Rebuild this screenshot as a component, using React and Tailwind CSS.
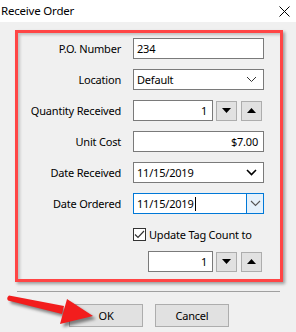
import React from "react";

function Chevron({ color = "#000", strokeWidth = 1.6 }) {
  return (
    <svg width="11" height="7" viewBox="0 0 11 7">
      <path d="M1 1 L5.5 5.5 L10 1" fill="none" stroke={color} strokeWidth={strokeWidth} />
    </svg>
  );
}

function SpinButton({ up }) {
  return (
    <div className="w-[21px] h-[20px] bg-[#e1e1e1] border border-[#adadad] flex items-center justify-center">
      <svg width="9" height="5" viewBox="0 0 9 5">
        {up ? <path d="M0 5 L4.5 0 L9 5 Z" fill="#000" /> : <path d="M0 0 L9 0 L4.5 5 Z" fill="#000" />}
      </svg>
    </div>
  );
}

function Row({ label, children }) {
  return (
    <div className="flex items-center h-[21px]">
      <div className="w-[103px] text-right">{label}</div>
      <div className="ml-[12px] flex items-center">{children}</div>
    </div>
  );
}

function TextBox({ value, right, width = "w-[131px]" }) {
  return (
    <div
      className={`${width} h-[21px] bg-white border border-[#7a7a7a] flex items-center px-[3px] ${
        right ? "justify-end pr-[5px]" : ""
      }`}
    >
      {value}
    </div>
  );
}

export default function App() {
  return (
    <div
      className="relative w-[296px] h-[332px] bg-[#f0f0f0] overflow-hidden text-[11px] tracking-[-0.2px] text-black leading-none"
      style={{ fontFamily: '"Noto Sans", "Open Sans", sans-serif' }}
    >
      {/* title bar */}
      <div className="h-[22px] bg-white flex items-center justify-between pl-[1px] pr-[6px]">
        <span className="text-[11.5px]">Receive Order</span>
        <svg width="11" height="11" viewBox="0 0 11 11">
          <path d="M0.5 0.5 L10.5 10.5 M10.5 0.5 L0.5 10.5" stroke="#000" strokeWidth="1" />
        </svg>
      </div>

      {/* highlighted form */}
      <div className="ml-[15px] mt-[8px] w-[268px] h-[252px] border-[3px] border-[#ff4545] shadow-[2px_2px_3px_rgba(0,0,0,0.35),inset_2px_2px_3px_rgba(0,0,0,0.2)] pt-[5px] flex flex-col gap-[10px]">
        <Row label="P.O. Number">
          <TextBox value="234" />
        </Row>
        <Row label="Location">
          <div className="w-[131px] h-[21px] bg-white border border-[#7a7a7a] flex items-center justify-between pl-[3px] pr-[6px]">
            <span>Default</span>
            <Chevron color="#333" strokeWidth={1} />
          </div>
        </Row>
        <Row label="Quantity Received">
          <TextBox value="1" right width="w-[80px]" />
          <div className="ml-[3px] flex gap-[4px]">
            <SpinButton />
            <SpinButton up />
          </div>
        </Row>
        <Row label="Unit Cost">
          <TextBox value="$7.00" right />
        </Row>
        <Row label="Date Received">
          <div className="w-[131px] h-[21px] bg-white border border-[#7a7a7a] flex items-center justify-between pl-[3px] pr-[6px]">
            <span>11/15/2019</span>
            <Chevron />
          </div>
        </Row>
        <Row label="Date Ordered">
          <div className="w-[131px] h-[21px] bg-white border border-[#0078d7] flex items-stretch">
            <div className="flex-1 flex items-center pl-[3px]">
              <span>11/15/2019</span>
              <span className="w-[1px] h-[14px] bg-black ml-[1px]" />
            </div>
            <div className="w-[17px] bg-[#e5f1fb] border-l border-[#0078d7] flex items-center justify-center">
              <Chevron color="#555" strokeWidth={1.1} />
            </div>
          </div>
        </Row>
        <div className="flex items-center mt-[4px] ml-[115px] h-[13px]">
          <div className="w-[13px] h-[13px] border border-[#333] bg-white flex items-center justify-center">
            <svg width="11" height="9" viewBox="0 0 11 9">
              <path d="M1 4.5 L4 7.5 L10 1" fill="none" stroke="#333" strokeWidth="1.2" />
            </svg>
          </div>
          <span className="ml-[3px]">Update Tag Count to</span>
        </div>
        <div className="flex items-center ml-[130px]">
          <TextBox value="1" right width="w-[65px]" />
          <div className="ml-[3px] flex gap-[4px]">
            <SpinButton />
            <SpinButton up />
          </div>
        </div>
      </div>

      {/* separator */}
      <div className="ml-[17px] mt-[9px] w-[263px] h-[1px] bg-[#a0a0a0]" />

      {/* buttons */}
      <div className="flex gap-[12px] ml-[69px] mt-[12px]">
        <div className="w-[74px] h-[23px] bg-[#e1e1e1] border border-[#adadad] flex items-center justify-center">OK</div>
        <div className="w-[74px] h-[23px] bg-[#e1e1e1] border border-[#adadad] flex items-center justify-center">Cancel</div>
      </div>

      {/* annotation arrow */}
      <svg className="absolute left-0 top-0" width="296" height="332" viewBox="0 0 296 332">
        <defs>
          <filter id="blur" x="-20%" y="-20%" width="140%" height="140%">
            <feGaussianBlur stdDeviation="1.5" />
          </filter>
        </defs>
        <g transform="translate(3,3)" fill="rgba(0,0,0,0.45)" filter="url(#blur)">
          <path d="M9 295.5 L64 306 L62 314 L8 300.5 Q6 298 9 295.5 Z" />
          <path d="M67 299 L93 316 L60 324 Z" />
        </g>
        <g fill="#f21d1d">
          <path d="M9 295.5 L64 306 L62 314 L8 300.5 Q6 298 9 295.5 Z" />
          <path d="M67 299 L93 316 L60 324 Z" />
        </g>
      </svg>
    </div>
  );
}
